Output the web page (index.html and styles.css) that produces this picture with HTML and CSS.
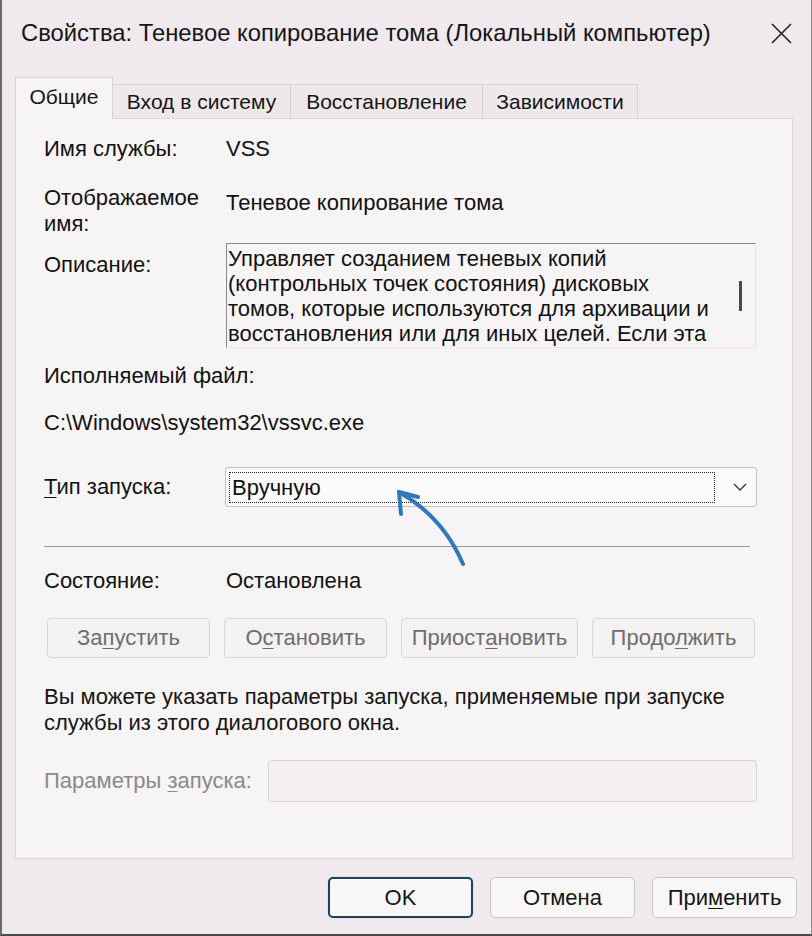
FILE: index.html
```html
<!DOCTYPE html>
<html lang="ru">
<head>
<meta charset="utf-8">
<title>Свойства: Теневое копирование тома</title>
<link rel="stylesheet" href="styles.css">
</head>
<body>
<div class="window">
  <div class="titlebar">
    <span class="title">Свойства: Теневое копирование тома (Локальный компьютер)</span>
    <svg class="close" width="21" height="21" viewBox="0 0 21 21"><path d="M1 1L20 20M20 1L1 20" stroke="#222" stroke-width="1.6" fill="none"/></svg>
  </div>
  <div class="tabs">
    <div class="tab active t1">Общие</div>
    <div class="tab t2">Вход в систему</div>
    <div class="tab t3">Восстановление</div>
    <div class="tab t4">Зависимости</div>
  </div>
  <div class="panel">
    <div class="field r1"><span>Имя службы:</span><span class="val">VSS</span></div>
    <div class="field r2"><span>Отображаемое<br>имя:</span><span class="val v2">Теневое копирование тома</span></div>
    <div class="field r3"><span class="lab3">Описание:</span>
      <div class="desc">
        <div class="desc-text">Управляет созданием теневых копий<br>(контрольных точек состояния) дисковых<br>томов, которые используются для архивации и<br>восстановления или для иных целей. Если эта</div>
        <div class="thumb"></div>
      </div>
    </div>
    <div class="line r4">Исполняемый файл:</div>
    <div class="line r5">C:\Windows\system32\vssvc.exe</div>
    <div class="field r6"><span class="lab6"><u>Т</u>ип запуска:</span>
      <div class="combo">
        <div class="focus">Вручную</div>
        <svg class="chev" width="14" height="8" viewBox="0 0 14 8"><path d="M1 1L7 7L13 1" stroke="#333" stroke-width="1.3" fill="none"/></svg>
      </div>
    </div>
    <div class="sep"></div>
    <div class="field r7"><span>Состояние:</span><span class="val">Остановлена</span></div>
    <div class="btnrow">
      <div class="btn dis b1">За<u>п</u>устить</div>
      <div class="btn dis b2">О<u>с</u>тановить</div>
      <div class="btn dis b3">Приост<u>а</u>новить</div>
      <div class="btn dis b4">Продо<u>л</u>жить</div>
    </div>
    <p class="para">Вы можете указать параметры запуска, применяемые при запуске<br>службы из этого диалогового окна.</p>
    <div class="params"><span class="plabel">Параметры <u>з</u>апуска:</span><div class="pfield"></div></div>
  </div>
  <div class="footer">
    <div class="fbtn ok">OK</div>
    <div class="fbtn">Отмена</div>
    <div class="fbtn">При<u>м</u>енить</div>
  </div>
  <svg class="arrow" width="812" height="936" viewBox="0 0 812 936">
    <path d="M463 564C452 538 432 511 399 492" stroke="#2f79b8" stroke-width="4" fill="none" stroke-linecap="round"/>
    <path d="M401 514L399 492L418 497" stroke="#2f79b8" stroke-width="4" fill="none" stroke-linecap="round" stroke-linejoin="round"/>
  </svg>
</div>
</body>
</html>
```
FILE: styles.css
```css
body {
  margin: 0;
  background: #efe8ec;
  font-family: "Liberation Sans", Arial, sans-serif;
  color: #111;
}
.window {
  position: relative;
  width: 812px;
  height: 936px;
  box-sizing: border-box;
  border-left: 2px solid #6a6a6a;
  border-right: 1px solid #8a8a8a;
  border-bottom: 2px solid #4a4a4a;
  background: #f0e9ed;
}
.titlebar {
  height: 77px;
  box-sizing: border-box;
  display: flex;
  justify-content: space-between;
  align-items: flex-start;
  padding: 17px 19px 0 19px;
}
.title {
  font-size: 23.8px;
  line-height: 32px;
  color: #151515;
}
.close {
  margin-top: 6px;
}
.tabs {
  display: flex;
  align-items: flex-end;
  margin-left: 13px;
  height: 41px;
  position: relative;
  z-index: 1;
}
.tab {
  height: 34px;
  box-sizing: border-box;
  border: 1px solid #d6d2d5;
  border-bottom: none;
  background: #eee8eb;
  font-size: 21px;
  line-height: 34px;
  text-align: center;
  margin-left: -1px;
  color: #151515;
}
.tab.active {
  height: 42px;
  margin-left: 0;
  margin-bottom: -1px;
  background: #f7f4f6;
  line-height: 38px;
}
.t1 { width: 98px; }
.t2 { width: 179px; }
.t3 { width: 193px; }
.t4 { width: 156px; }
.panel {
  margin-left: 13px;
  width: 778px;
  box-sizing: border-box;
  border: 1px solid #d8d5d8;
  background: #f7f4f6;
  padding: 17px 36px 56px 28px;
  font-size: 22px;
  line-height: 26px;
}
.field {
  display: grid;
  grid-template-columns: 182px 1fr;
}
.r2 { margin-top: 23px; }
.v2 { padding-top: 5px; }
.r3 { margin-top: 6px; }
.lab3 { padding-top: 9px; }
.desc {
  position: relative;
  height: 105px;
  box-sizing: border-box;
  border-top: 1px solid #8a8a8a;
  border-left: 1px solid #8a8a8a;
  border-right: 1px solid #e6e2e5;
  border-bottom: 1px solid #ece8eb;
  overflow: hidden;
}
.desc-text {
  padding: 2px 0 0 1px;
  line-height: 25px;
  white-space: nowrap;
}
.thumb {
  position: absolute;
  left: 512px;
  top: 37px;
  width: 3px;
  height: 30px;
  background: #4a4a4a;
}
.r4 { margin-top: 15px; }
.r5 { margin-top: 21px; }
.r6 {
  margin-top: 31px;
  line-height: 40px;
}
.combo {
  height: 40px;
  box-sizing: border-box;
  margin-left: -1px;
  margin-right: -1px;
  border: 1px solid #c3c0c3;
  border-radius: 3px;
  background: #fbfafb;
  display: flex;
  align-items: center;
  padding: 0 9px 0 3px;
  gap: 18px;
}
.focus {
  flex: 1;
  height: 31px;
  box-sizing: border-box;
  border: 1px dotted #222;
  line-height: 29px;
  padding-left: 2px;
}
.chev { flex: none; }
.sep {
  margin-top: 39px;
  margin-right: 6px;
  height: 1px;
  background: #9b989b;
}
.r7 { margin-top: 21px; }
.btnrow {
  margin-top: 24px;
  margin-left: 3px;
  display: flex;
  gap: 14px;
}
.btn {
  height: 40px;
  box-sizing: border-box;
  border: 1px solid #d9d6d9;
  border-radius: 4px;
  background: #f4f1f3;
  text-align: center;
  line-height: 38px;
  font-size: 22px;
}
.dis { color: #6e6e6e; }
.b1, .b2, .b4 { width: 163px; }
.b3 { width: 177px; }
.para {
  margin: 26px 0 0 0;
  color: #151515;
}
.params {
  margin-top: 24px;
  display: flex;
  align-items: center;
}
.plabel {
  width: 224px;
  color: #8a8a8a;
}
.pfield {
  flex: 1;
  height: 42px;
  box-sizing: border-box;
  margin-right: -1px;
  border: 1px solid #d8d5d8;
  border-radius: 3px;
  background: #f3eff2;
}
.footer {
  display: flex;
  justify-content: flex-end;
  gap: 17px;
  padding: 18px 14px 0 0;
}
.fbtn {
  width: 145px;
  height: 41px;
  box-sizing: border-box;
  border: 1px solid #c8c5c8;
  border-radius: 5px;
  background: #f8f6f7;
  text-align: center;
  line-height: 39px;
  font-size: 22px;
  color: #151515;
}
.fbtn.ok {
  border: 2px solid #23405b;
  line-height: 37px;
  box-shadow: 0 0 0 1px #d6e6ee;
}
u {
  text-decoration-thickness: 1px;
  text-underline-offset: 3px;
}
.arrow {
  position: absolute;
  left: -2px;
  top: 0;
  pointer-events: none;
}
```
